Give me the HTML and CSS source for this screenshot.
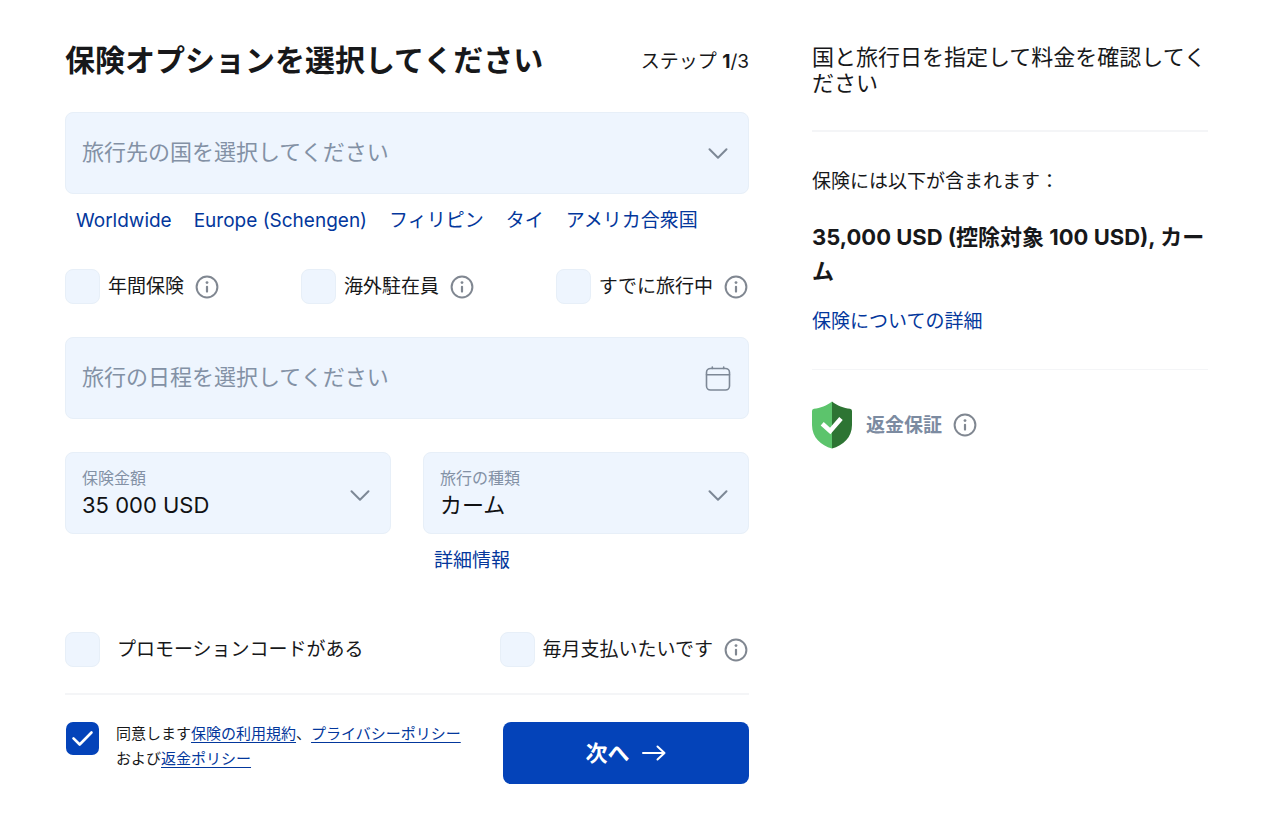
FILE: index.html
```html
<!DOCTYPE html>
<html lang="ja">
<head>
<meta charset="utf-8">
<meta name="viewport" content="width=device-width, initial-scale=1">
<title>保険オプション</title>
<link rel="stylesheet" href="styles.css">
</head>
<body>
<svg class="sprite" aria-hidden="true">
  <symbol id="info" viewBox="0 0 24 24">
    <circle cx="12" cy="12" r="10.4" fill="none" stroke="currentColor" stroke-width="2"/>
    <circle cx="12" cy="7.6" r="1.4" fill="currentColor"/>
    <path d="M12 11.8v4.800" fill="none" stroke="currentColor" stroke-width="2.2" stroke-linecap="round"/>
  </symbol>
  <symbol id="chevron" viewBox="0 0 24 24">
    <path d="M3.5 8.2 12 16.8l8.500-8.600" fill="none" stroke="currentColor" stroke-width="2" stroke-linecap="round" stroke-linejoin="round"/>
  </symbol>
</svg>
<div class="page">
  <main>
    <form class="form">
      <header class="form-header">
        <h1>保険オプションを選択してください</h1>
        <p class="step">ステップ <b>1</b>/3</p>
      </header>

      <div class="field">
        <select class="control placeholder" aria-label="旅行先の国">
          <option>旅行先の国を選択してください</option>
        </select>
        <svg class="field-icon" aria-hidden="true"><use href="#chevron"/></svg>
      </div>
      <nav class="quick-links">
        <a href="#">Worldwide</a>
        <a href="#">Europe (Schengen)</a>
        <a href="#">フィリピン</a>
        <a href="#">タイ</a>
        <a href="#">アメリカ合衆国</a>
      </nav>

      <div class="checks">
        <div class="check">
          <input type="checkbox" id="annual"><label for="annual">年間保険</label>
          <button type="button" class="info" aria-label="情報"><svg><use href="#info"/></svg></button>
        </div>
        <div class="check">
          <input type="checkbox" id="expat"><label for="expat">海外駐在員</label>
          <button type="button" class="info" aria-label="情報"><svg><use href="#info"/></svg></button>
        </div>
        <div class="check">
          <input type="checkbox" id="traveling"><label for="traveling">すでに旅行中</label>
          <button type="button" class="info" aria-label="情報"><svg><use href="#info"/></svg></button>
        </div>
      </div>

      <div class="field">
        <input class="control" type="text" aria-label="旅行の日程" placeholder="旅行の日程を選択してください">
        <svg class="field-icon" viewBox="0 0 28 28" aria-hidden="true">
          <g fill="none" stroke="currentColor" stroke-width="1.600" stroke-linecap="round">
            <rect x="2.500" y="4.500" width="23" height="21.500" rx="4"/>
            <path d="M2.500 10.700h23M8.300 3v1.500M19.700 3v1.500"/>
          </g>
        </svg>
      </div>

      <div class="pair">
        <div>
          <div class="field">
            <label class="caption" for="amount">保険金額</label>
            <select class="control captioned" id="amount"><option>35 000 USD</option></select>
            <svg class="field-icon" aria-hidden="true"><use href="#chevron"/></svg>
          </div>
        </div>
        <div>
          <div class="field">
            <label class="caption" for="kind">旅行の種類</label>
            <select class="control captioned" id="kind"><option>カーム</option></select>
            <svg class="field-icon" aria-hidden="true"><use href="#chevron"/></svg>
          </div>
          <nav class="quick-links"><a href="#">詳細情報</a></nav>
        </div>
      </div>

      <div class="checks extras">
        <div class="check wide">
          <input type="checkbox" id="promo"><label for="promo">プロモーションコードがある</label>
        </div>
        <div class="check">
          <input type="checkbox" id="monthly"><label for="monthly">毎月支払いたいです</label>
          <button type="button" class="info" aria-label="情報"><svg><use href="#info"/></svg></button>
        </div>
      </div>

      <footer class="form-footer">
        <div class="agree">
          <span class="tick">
            <input type="checkbox" id="agree" checked>
            <svg viewBox="0 0 35 35" aria-hidden="true"><path d="m8.500 17.300 6.200 6.200L26.500 11.500" fill="none" stroke="#fff" stroke-width="2.600" stroke-linecap="round" stroke-linejoin="round"/></svg>
          </span>
          <label for="agree">同意します<a href="#">保険の利用規約</a>、<a href="#">プライバシーポリシー</a>および<a href="#">返金ポリシー</a></label>
        </div>
        <button class="next" type="submit">次へ
          <svg viewBox="0 0 24 24" aria-hidden="true"><path d="M1 12h21.500M15.500 5.500 22.500 12l-7 6.500" fill="none" stroke="currentColor" stroke-width="2" stroke-linecap="round" stroke-linejoin="round"/></svg>
        </button>
      </footer>
    </form>
  </main>

  <aside class="summary">
    <p class="summary-lead">国と旅行日を指定して料金を確認してください</p>
    <section class="included">
      <p>保険には以下が含まれます：</p>
      <p class="plan">35,000 USD (控除対象 100 USD), カーム</p>
      <a href="#">保険についての詳細</a>
    </section>
    <div class="guarantee">
      <svg class="shield" viewBox="0 0 40 48" aria-hidden="true">
        <path d="M20 .500C15 4.500 8 7.300 2 7.700Q0 7.900 0 10v14c0 12.500 9 20.500 20 23.500z" fill="#5cc46c"/>
        <path d="M20 .500C25 4.500 32 7.300 38 7.700Q40 7.900 40 10v14c0 12.500-9 20.500-20 23.500z" fill="#2d7433"/>
        <path d="m10.200 22.800 8 7.200L29 17.600" fill="none" stroke="#fff" stroke-width="4.600"/>
      </svg>
      <strong>返金保証</strong>
      <button type="button" class="info" aria-label="情報"><svg><use href="#info"/></svg></button>
    </div>
  </aside>
</div>
</body>
</html>
```
FILE: styles.css
```css
* { box-sizing: border-box; }

body {
  margin: 0;
  background: #fff;
  color: #17181a;
  font: 19px/24px Inter, "Noto Sans CJK JP", sans-serif;
}

h1, p { margin: 0; }
a { color: #03379c; text-decoration: none; }
button, input, select { margin: 0; font: inherit; color: inherit; }
svg { display: block; }
.sprite { display: none; }

.page {
  display: grid;
  grid-template-columns: 19fr 11fr;
  gap: 63px;
  align-items: start;
  padding: 40px 72px 38px 65px;
}

.form-header {
  display: flex;
  justify-content: space-between;
  align-items: center;
  margin-bottom: 32px;
}
.form-header h1 { font-size: 30px; line-height: 40px; font-weight: 700; }
.step { padding-top: 3px; }

.field {
  display: grid;
  height: 82px;
  background: #eef5fe;
  border: 1px solid #e7eff8;
  border-radius: 8px;
}
.field > * { grid-area: 1 / 1; }
.control {
  width: 100%;
  min-width: 0;
  padding: 0 64px 2px 16px;
  border: 0;
  border-radius: 8px;
  background: transparent;
  appearance: none;
  font-size: 22px;
  line-height: 28px;
  color: #101113;
}
.control.placeholder, .control::placeholder { color: #8391a5; opacity: 1; }
.control.captioned { padding-top: 26px; padding-bottom: 2px; }
.caption {
  place-self: start;
  padding: 13px 16px 0;
  font-size: 16px;
  color: #8391a5;
  pointer-events: none;
}
.field-icon {
  width: 28px;
  height: 28px;
  place-self: center end;
  margin-right: 16px;
  color: #7d8896;
  pointer-events: none;
}
.field-icon:has(use) { width: 24px; height: 24px; margin-right: 18px; }
.pair .field-icon { margin-top: 3px; }

.quick-links {
  display: flex;
  flex-wrap: wrap;
  gap: 8px 22px;
  margin-top: 15px;
  padding: 0 11px;
}

.checks {
  display: flex;
  flex-wrap: wrap;
  justify-content: space-between;
  gap: 16px;
  margin: 36px 0 33px;
}
.check { display: flex; align-items: center; gap: 8px; padding-right: 1px; }
.check.wide { gap: 17px; }
.check .info { margin-left: 3px; }
input[type="checkbox"] {
  width: 35px;
  height: 35px;
  flex: none;
  appearance: none;
  background: #eef5fe;
  border: 1px solid #e7eff8;
  border-radius: 8px;
}
.info {
  width: 24px;
  height: 24px;
  flex: none;
  padding: 0;
  border: 0;
  background: none;
  color: #808791;
}
.info svg { width: 24px; height: 24px; }

.pair {
  display: grid;
  grid-template-columns: 1fr 1fr;
  gap: 32px;
  margin-top: 33px;
}

.extras { margin: 59px 0 26px; }

.form-footer {
  display: flex;
  justify-content: space-between;
  gap: 32px;
  padding-top: 27px;
  border-top: 2px solid #f4f5f7;
}
.agree {
  display: flex;
  align-items: flex-start;
  gap: 16px;
  margin-top: -1px;
  font-size: 15px;
  line-height: 25px;
}
.agree a { text-decoration: underline; text-underline-offset: 3px; text-decoration-thickness: 1px; }
.tick { display: grid; flex: none; }
.tick > * { grid-area: 1 / 1; }
.tick svg { width: 35px; height: 35px; pointer-events: none; visibility: hidden; }
.tick input:checked { background: #0443b9 padding-box; border-color: transparent; }
.tick input:checked + svg { visibility: visible; }

.next {
  display: flex;
  flex: 0 0 36%;
  justify-content: center;
  align-items: center;
  gap: 13px;
  height: 62px;
  border: 0;
  border-radius: 8px;
  background: #0443b9;
  color: #fff;
  font-size: 22px;
  font-weight: 700;
}
.next svg { width: 24px; height: 24px; }

.summary-lead {
  padding: 4px 0 34px;
  font-size: 22px;
  line-height: 26px;
}
.included {
  padding: 38px 0 35px;
  border: solid #f4f5f7;
  border-width: 2px 0 1px;
}
.plan {
  margin: 26px 0 22px;
  font-size: 22px;
  line-height: 34px;
  font-weight: 700;
}
.guarantee {
  display: flex;
  align-items: center;
  margin-top: 31px;
  color: #7c8ba1;
}
.shield { width: 40px; height: 48px; margin-right: 14px; }
.guarantee strong { padding-top: 2px; }
.guarantee .info { margin-left: 11px; }
```
